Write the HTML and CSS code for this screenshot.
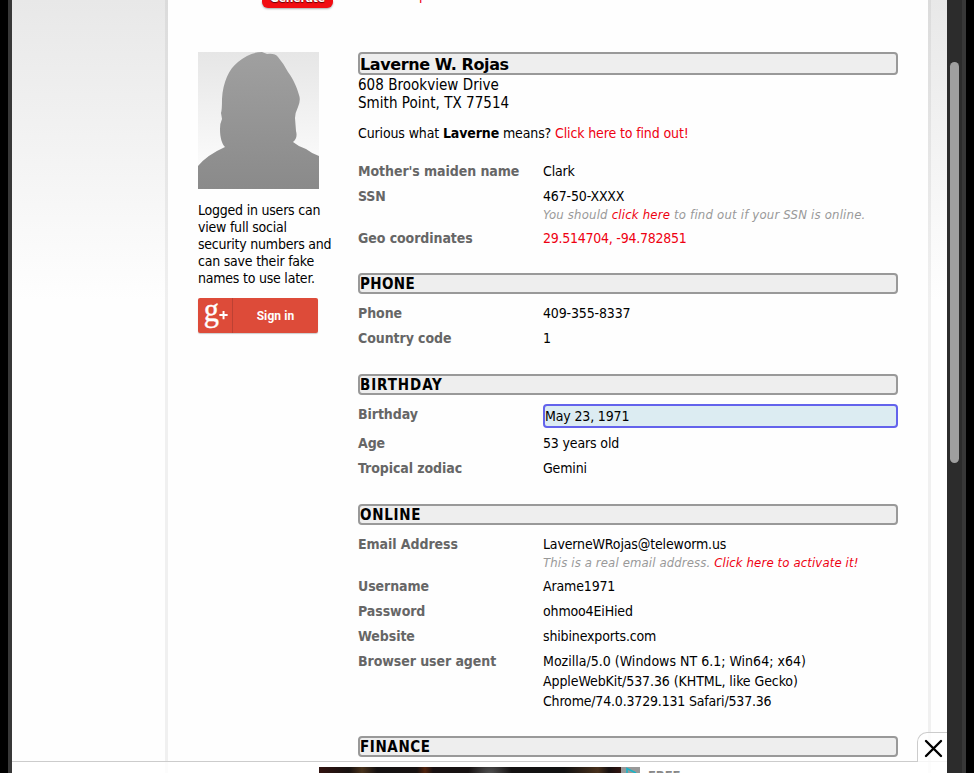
FILE: index.html
```
<!DOCTYPE html>
<html lang="en">
<head>
<meta charset="utf-8">
<title>Laverne W. Rojas</title>
<link rel="stylesheet" href="styles.css">
</head>
<body>
<div class="frame">
  <div class="viewport">
    <div class="gutter"></div>
    <main class="page">
      <div class="topline">
        <div class="generate"><span>Generate</span></div>
        <span class="options">p</span>
      </div>
      <div class="columns">
        <aside class="side">
          <svg class="avatar" width="121" height="137" viewBox="0 0 121 137">
            <defs>
              <linearGradient id="bg" x1="0" y1="0" x2="0" y2="1"><stop offset="0" stop-color="#e6e6e6"/><stop offset="1" stop-color="#fff"/></linearGradient>
              <linearGradient id="fg" x1="0" y1="0" x2="0" y2="1"><stop offset="0" stop-color="#a0a0a0"/><stop offset="1" stop-color="#8a8a8a"/></linearGradient>
            </defs>
            <rect width="121" height="137" fill="url(#bg)"/>
            <path fill="url(#fg)" d="M0 137V114Q9 103 27 95C24 92 22 86 22 77Q22 71 24 67L23 61Q24 58 24 47C25 30 31 17 40 10Q52 0 64 0L69 2Q77 1 80 5Q86 12 90 20C96 28 99 36 101 43Q103 48 100 55Q97 61 97 66L98 79Q100 86 95 90Q101 95 108 97Q113 101 121 104V137Z"/>
          </svg>
          <p class="login">Logged in users can<br>view full social<br>security numbers and<br>can save their fake<br>names to use later.</p>
          <div class="google">
            <svg class="gplus" width="35" height="35" viewBox="0 0 35 35">
              <text class="g" transform="translate(5.8 23.6) scale(.92 1.04)">g</text>
              <path d="M22 17h8.5M26.3 12.8v8.5" fill="none" stroke="#fff" stroke-width="2"/>
            </svg>
            <span class="signin">Sign in</span>
          </div>
        </aside>
        <section class="info">
          <h3 class="bar name">Laverne W. Rojas</h3>
          <p class="address">608 Brookview Drive<br>Smith Point, TX 77514</p>
          <p class="curious">Curious what <b>Laverne</b> means? <a>Click here to find out!</a></p>
          <dl class="list">
            <dt>Mother's maiden name</dt><dd>Clark</dd>
            <dt>SSN</dt><dd>467-50-XXXX<div class="note">You should <a>click here</a> to find out if your SSN is online.</div></dd>
            <dt>Geo coordinates</dt><dd class="geo"><a>29.514704, -94.782851</a></dd>
          </dl>
          <h3 class="bar phone">PHONE</h3>
          <dl class="list">
            <dt>Phone</dt><dd>409-355-8337</dd>
            <dt>Country code</dt><dd>1</dd>
          </dl>
          <h3 class="bar birthday">BIRTHDAY</h3>
          <dl class="list">
            <dt>Birthday</dt><dd class="marked">May 23, 1971</dd>
            <dt>Age</dt><dd>53 years old</dd>
            <dt>Tropical zodiac</dt><dd>Gemini</dd>
          </dl>
          <h3 class="bar">ONLINE</h3>
          <dl class="list">
            <dt>Email Address</dt><dd>LaverneWRojas@teleworm.us<div class="note email">This is a real email address. <a>Click here to activate it!</a></div></dd>
            <dt>Username</dt><dd>Arame1971</dd>
            <dt>Password</dt><dd>ohmoo4EiHied</dd>
            <dt>Website</dt><dd>shibinexports.com</dd>
            <dt>Browser user agent</dt><dd><span class="agent">Mozilla/5.0 (Windows NT 6.1; Win64; x64)</span><br><span class="engine">AppleWebKit/537.36 (KHTML, like Gecko)</span><br><span class="build">Chrome/74.0.3729.131 Safari/537.36</span></dd>
          </dl>
          <h3 class="bar finance">FINANCE</h3>
        </section>
      </div>
    </main>
    <div class="gutter"></div>
    <div class="dock">
      <div class="close">
        <svg width="29" height="29" viewBox="0 0 29 29" stroke="#000" stroke-width="2.4" stroke-linecap="round"><path d="M8 8L23 23M23 8L8 23"/></svg>
      </div>
      <div class="ad">
        <div class="art"></div>
        <svg class="choice" width="19" height="6" viewBox="0 0 19 6"><rect width="19" height="6" fill="#999"/><path d="M6 6V1.5L15 6" fill="none" stroke="#18b5c8" stroke-width="1.6"/></svg>
        <span class="adtext">FREE</span>
      </div>
    </div>
  </div>
  <div class="scroll"><div class="thumb"></div></div>
</div>
</body>
</html>
```
FILE: styles.css
```
* { box-sizing: border-box; }
body {
  margin: 0;
  background: #000;
  color: #000;
  font: 14px/20px "DejaVu Sans Condensed", "DejaVu Sans", sans-serif;
  font-stretch: condensed;
  letter-spacing: -.15px;
}
p, h3, dl, dd { margin: 0; }
a { color: #ee0011; }
.frame {
  width: 958px;
  height: 773px;
  margin-left: 8px;
  display: flex;
  border: solid #383838;
  border-width: 0 4px;
  overflow: hidden;
}
.viewport {
  position: relative;
  width: 935px;
  height: 773px;
  display: grid;
  grid-template-columns: 153px 766px 16px;
  background: linear-gradient(#e8e8e8, #fefefe 300px);
  overflow: hidden;
}
.page {
  height: 773px;
  background: #fefefe;
  border: solid rgba(0, 0, 0, .055);
  border-width: 0 3px;
  background-clip: padding-box;
}
.topline { display: flex; height: 52px; padding-left: 94px; align-items: flex-start; }
.generate {
  width: 71px;
  height: 8px;
  border-radius: 0 0 6px 6px;
  background: #f20d12;
  box-shadow: 0 1px 2px #aaa;
  display: flex;
  align-items: flex-end;
  justify-content: center;
  overflow: hidden;
  color: #fff;
  font-size: 12px;
  font-weight: bold;
  line-height: 20px;
  text-shadow: 0 1px 1px #600;
}
.options { margin: -13px 0 0 86px; height: 16px; line-height: 16px; overflow: hidden; color: #ee0011; }
.columns { display: grid; grid-template-columns: 160px 540px; padding-left: 30px; }
.avatar { display: block; }
.login { margin-top: 13px; line-height: 17px; white-space: nowrap; letter-spacing: -.22px; }
.google {
  display: flex;
  width: 120px;
  height: 35px;
  margin-top: 11px;
  border-radius: 2px;
  background: #dd4b39;
  box-shadow: 0 1px 1px #ccc;
}
.gplus { border-right: 1px solid #bd4133; }
.g { fill: #fff; stroke: #fff; stroke-width: .4px; font: 34px "Liberation Serif", serif; }
.signin { flex: 1; text-align: center; color: #fff; font: bold 12px/36px Roboto, sans-serif; letter-spacing: .1px; }
.bar {
  height: 21px;
  border: 2px solid #999;
  border-radius: 4px;
  background: #eee;
  font-size: 15px;
  line-height: 18px;
  letter-spacing: .7px;
  margin-bottom: 9px;
}
.name {
  height: 23px;
  font-family: "DejaVu Sans", sans-serif;
  font-stretch: normal;
  font-size: 16px;
  line-height: 21px;
  letter-spacing: -.4px;
  margin: 0;
}
.address { font-size: 15px; line-height: 18px; margin-top: 1px; letter-spacing: .04px; }
.curious { line-height: 20px; margin: 11px 0 18px; white-space: nowrap; letter-spacing: -.13px; }
.list {
  display: grid;
  grid-template-columns: 185px 355px;
  row-gap: 5px;
  margin-bottom: 26px;
}
.phone { margin-top: -1px; letter-spacing: .4px; }
.birthday { letter-spacing: .9px; }
.finance { margin-top: -1px; letter-spacing: .6px; }
dt { color: #666; font-weight: bold; letter-spacing: -.07px; }
dd { white-space: nowrap; }
.geo { letter-spacing: -.25px; }
.agent { letter-spacing: .01px; }
.engine { letter-spacing: -.08px; }
.build { letter-spacing: -.18px; }
.note { font-size: 13px; line-height: 17px; font-style: italic; color: #999; letter-spacing: .2px; }
.email { letter-spacing: .13px; }
.marked {
  height: 24px;
  border: 2px solid #6363ec;
  border-radius: 4px;
  background: #dcecf2;
}
.scroll { width: 15px; background: #2c2c2c; padding: 62px 3px 0; }
.thumb { width: 9px; height: 401px; border-radius: 5px; background: #9f9f9f; }
.dock {
  position: absolute;
  left: 0;
  right: 0;
  bottom: 0;
  height: 12px;
  border-top: 1px solid #ccc;
  background: rgba(255, 255, 255, .8);
}
.close {
  position: absolute;
  right: 0;
  bottom: 11px;
  width: 30px;
  height: 30px;
  border: solid #ccc;
  border-width: 1px 0 0 1px;
  border-top-left-radius: 10px;
  background: rgba(255, 255, 255, .8);
}
.close svg { display: block; }
.ad { display: flex; align-items: flex-start; height: 11px; padding: 5px 0 0 307px; overflow: hidden; }
.art {
  width: 302px;
  height: 6px;
  background:
    radial-gradient(circle at 171px 8px, #555 0, transparent 22px),
    linear-gradient(90deg, #321310, #171110 30px, #49331d 43px, #151111 58px, #171211 98px, #51230e 106px, #181111 114px, #111 245px, #47301c 279px, #171010 290px, #321510);
}
.adtext { margin: 2px 0 0 8px; color: #888; font-weight: bold; font-size: 13px; line-height: 14px; }
```
